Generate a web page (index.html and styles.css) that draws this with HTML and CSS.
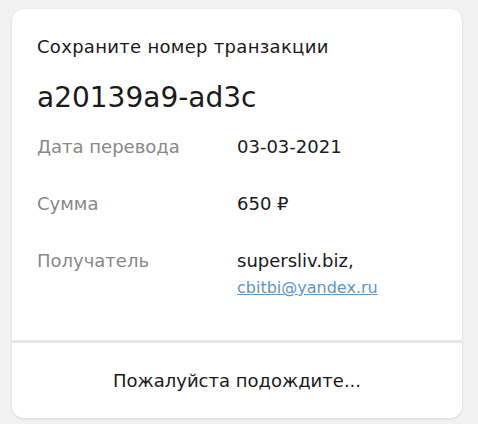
FILE: index.html
```html
<!DOCTYPE html>
<html lang="ru">
<head>
  <meta charset="UTF-8" />
  <meta name="viewport" content="width=device-width, initial-scale=1.0"/>
  <title>Номер транзакции</title>
  <link rel="stylesheet" href="styles.css">
</head>
<body>

  <div class="card">
    <div class="card-body">
      <p class="hint">Сохраните номер транзакции</p>
      <div class="tx-id">a20139a9-ad3c</div>

      <div class="details">
        <div class="label">Дата перевода</div>
        <div class="value">03-03-2021</div>

        <div class="label">Сумма</div>
        <div class="value">650 ₽</div>

        <div class="label">Получатель</div>
        <div class="value">
          supersliv.biz,
          <a class="email" href="mailto:cbitbi@yandex.ru">cbitbi@yandex.ru</a>
        </div>
      </div>
    </div>

    <div class="card-footer">Пожалуйста подождите...</div>
  </div>

</body>
</html>
```

FILE: styles.css
```css
:root {
  --bg-color: #f2f2f2;
  --text-color: #1a1a1a;
  --muted-color: #888;
  --line-color: #e6e6e6;
  --link-color: #5a98c6;
}

body {
  font-family: 'DejaVu Sans', sans-serif;
  background-color: var(--bg-color);
  color: var(--text-color);
  margin: 0;
  padding: 9px 16px 6px 12px;
}

.card {
  background: #fff;
  border-radius: 12px;
  box-shadow: 0 1px 3px rgba(0, 0, 0, 0.12);
  overflow: hidden;
}

.card-body {
  height: 331px;
  box-sizing: border-box;
  padding: 27px 25px 0;
}

.hint {
  margin: 0;
  font-size: 18px;
  line-height: 22px;
  letter-spacing: 0.3px;
}

.tx-id {
  margin-top: 23px;
  font-size: 28px;
  line-height: 34px;
}

.details {
  display: grid;
  grid-template-columns: 200px 1fr;
  row-gap: 35px;
  margin-top: 21px;
  font-size: 18px;
  line-height: 22px;
}

.label {
  color: var(--muted-color);
}

.email {
  display: block;
  margin-top: 6px;
  font-size: 16px;
  line-height: 20px;
  color: var(--link-color);
}

.card-footer {
  border-top: 3px solid var(--line-color);
  height: 75px;
  display: flex;
  align-items: center;
  justify-content: center;
  font-size: 18px;
  line-height: 22px;
}
```
